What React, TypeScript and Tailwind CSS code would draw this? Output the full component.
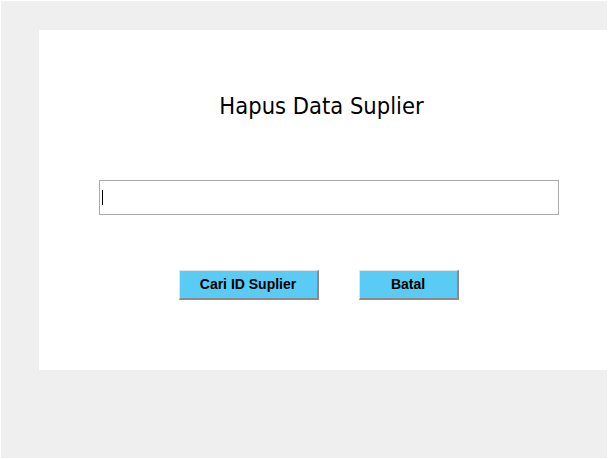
export default function App() {
  return (
    <div className="w-[608px] h-[459px] bg-white p-px">
      <div className="w-full h-full bg-[#efefef] pt-[29px] pl-[38px]">
        <div className="bg-white h-[340px] flex flex-col items-center">
          <div
            className="mt-[60px] text-[23.5px] leading-[32px] text-black ml-[-3px]"
            style={{ fontFamily: '"DejaVu Sans Condensed", "DejaVu Sans", sans-serif' }}
          >
            Hapus Data Suplier
          </div>
          <div className="self-start ml-[60px] mt-[58px] w-[460px] h-[35px] border border-[#ababab] flex items-center pl-[2px]">
            <div className="w-px h-[15px] bg-black" />
          </div>
          <div
            className="flex gap-[40px] mt-[55px] ml-[-9px] text-[14px] font-bold text-black"
            style={{ fontFamily: '"Liberation Sans", Arial, sans-serif' }}
          >
            <div className="w-[140px] h-[30px] bg-[#59cbf4] border-t border-l border-t-[#e3e3e3] border-l-[#e3e3e3] border-b-2 border-r-2 border-b-[#8a8a8a] border-r-[#8a8a8a] flex items-center justify-center">
              Cari ID Suplier
            </div>
            <div className="w-[100px] h-[30px] bg-[#59cbf4] border-t border-l border-t-[#e3e3e3] border-l-[#e3e3e3] border-b-2 border-r-2 border-b-[#8a8a8a] border-r-[#8a8a8a] flex items-center justify-center">
              Batal
            </div>
          </div>
        </div>
      </div>
    </div>
  );
}
